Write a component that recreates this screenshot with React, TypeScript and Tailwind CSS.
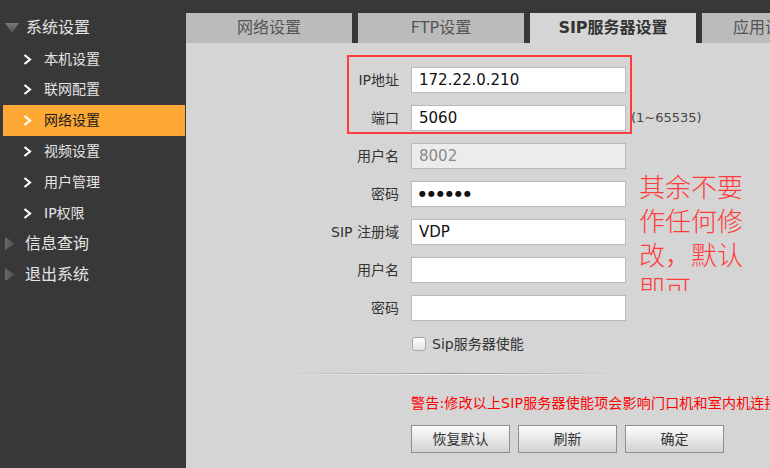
import React from "react";

const cjk = "font-['DejaVu_Sans','Noto_Sans_CJK_SC',sans-serif]";

function Chevron() {
  return (
    <svg width="9" height="11" viewBox="0 0 9 11" className="shrink-0">
      <polyline points="1.5,1 7,5.5 1.5,10" fill="none" stroke="#ffffff" strokeWidth="2.2" />
    </svg>
  );
}

function TriDown() {
  return (
    <svg width="14" height="10" viewBox="0 0 14 10" className="shrink-0">
      <defs>
        <linearGradient id="td" x1="0" y1="0" x2="0" y2="1">
          <stop offset="0" stopColor="#7a7a7a" />
          <stop offset="1" stopColor="#4e4e4e" />
        </linearGradient>
      </defs>
      <polygon points="0,0 14,0 7,10" fill="url(#td)" />
    </svg>
  );
}

function TriRight() {
  return (
    <svg width="10" height="13" viewBox="0 0 10 13" className="shrink-0">
      <defs>
        <linearGradient id="tr" x1="0" y1="0" x2="1" y2="0">
          <stop offset="0" stopColor="#6a6a6a" />
          <stop offset="1" stopColor="#4a4a4a" />
        </linearGradient>
      </defs>
      <polygon points="0,0 10,6.5 0,13" fill="url(#tr)" />
    </svg>
  );
}

const items = ["本机设置", "联网配置", "网络设置", "视频设置", "用户管理", "IP权限"];

function Sidebar() {
  return (
    <div className={`w-[186px] shrink-0 pt-[13px] ${cjk}`}>
      <div className="h-[30.8px] flex items-center pl-[5px]">
        <TriDown />
        <span className="ml-[7px] text-[16px] text-[#e4e4e4]">系统设置</span>
      </div>
      {items.map((t) => {
        const active = t === "网络设置";
        return (
          <div
            key={t}
            className={
              active
                ? "h-[30.8px] ml-[3px] mr-[1px] flex items-center pl-[20px] bg-[#fea935]"
                : "h-[30.8px] flex items-center pl-[23px]"
            }
          >
            <Chevron />
            <span
              className={
                active
                  ? "ml-[12px] text-[14px] text-[#1a1a1a]"
                  : "ml-[12px] text-[14px] text-[#e4e4e4]"
              }
            >
              {t}
            </span>
          </div>
        );
      })}
      {["信息查询", "退出系统"].map((t) => (
        <div key={t} className="h-[30.8px] flex items-center pl-[5px]">
          <TriRight />
          <span className="ml-[10px] text-[16px] text-[#e4e4e4]">{t}</span>
        </div>
      ))}
    </div>
  );
}

const tabs = ["网络设置", "FTP设置", "SIP服务器设置"];

function Field({
  label,
  value,
  disabled,
  password,
  suffix,
}: {
  label: string;
  value?: string;
  disabled?: boolean;
  password?: boolean;
  suffix?: string;
}) {
  return (
    <div className="h-[26px] flex items-center">
      <div className="w-[90px] text-right text-[14px] text-[#333]">{label}</div>
      <div
        className={
          "ml-[12px] w-[215px] h-full flex items-center pl-[7px] border border-[#b9b9b9] " +
          (disabled ? "bg-[#ececec] text-[#8a8a8a]" : "bg-white text-[#111]")
        }
      >
        {password ? (
          <span className="text-[8px] tracking-[2px] text-[#111]">{value}</span>
        ) : (
          <span className="text-[15px]">{value}</span>
        )}
      </div>
      {suffix && <span className="ml-[5px] text-[13px] text-[#444]">{suffix}</span>}
    </div>
  );
}

function Btn({ label }: { label: string }) {
  return (
    <button className="w-[99px] h-[28px] border border-[#8f8f8f] bg-gradient-to-b from-[#fdfdfd] to-[#d2d2d2] text-[14px] text-[#333] shadow-[inset_0_1px_0_#ffffff]">
      {label}
    </button>
  );
}

export default function App() {
  return (
    <div className={`w-[770px] h-[468px] flex bg-[#383838] overflow-hidden ${cjk}`}>
      <Sidebar />
      <div className="flex-1 mt-[13px] flex flex-col min-w-0">
        <div className="h-[30px] flex gap-[6px] shrink-0">
          {tabs.map((t) => {
            const active = t === "SIP服务器设置";
            return (
              <div
                key={t}
                className={
                  active
                    ? "w-[166px] shrink-0 flex items-center justify-center bg-[#d5d5d5] text-[16px] font-bold text-[#333]"
                    : "w-[166px] shrink-0 flex items-center justify-center bg-[#bbbbbb] text-[16px] text-[#555]"
                }
              >
                {t}
              </div>
            );
          })}
          <div className="w-[166px] shrink-0 flex items-center pl-[31px] bg-[#bbbbbb] text-[16px] text-[#555] whitespace-nowrap">
            应用设置
          </div>
        </div>

        <div className="relative flex-1 bg-[#d5d5d5] flex flex-col">
          <div className="ml-[123px] pt-[24px] flex flex-col gap-[12px]">
            <Field label="IP地址" value="172.22.0.210" />
            <Field label="端口" value="5060" suffix="(1~65535)" />
            <Field label="用户名" value="8002" disabled />
            <Field label="密码" value="●●●●●●" password />
            <Field label="SIP 注册域" value="VDP" />
            <Field label="用户名" value="" />
            <Field label="密码" value="" />
          </div>

          <div className="ml-[226px] mt-[15px] h-[16px] flex items-center">
            <span className="w-[14px] h-[14px] rounded-[3px] border border-[#a9a9a9] bg-gradient-to-b from-[#ffffff] to-[#e2e2e2]" />
            <span className="ml-[6px] text-[14px] text-[#333]">Sip服务器使能</span>
          </div>

          <div className="ml-[91px] mt-[21px] w-[350px] flex flex-col">
            <div className="h-px bg-gradient-to-r from-transparent via-[#9a9a9a] to-transparent" />
            <div className="h-px bg-gradient-to-r from-transparent via-[#f4f4f4] to-transparent" />
          </div>

          <div className="ml-[225px] mt-[18px] h-[20px] leading-[20px] whitespace-nowrap text-[14px] tracking-[0.2px] text-[#ff0000]">
            警告:修改以上SIP服务器使能项会影响门口机和室内机连接
          </div>

          <div className="ml-[225px] mt-[12px] flex gap-[8px]">
            <Btn label="恢复默认" />
            <Btn label="刷新" />
            <Btn label="确定" />
          </div>

          {/* annotation overlays */}
          <div className="absolute left-[161px] top-[12px] w-[285px] h-[79px] border-2 border-[#ff3b3b] pointer-events-none" />
          <div className="absolute left-[453px] top-[126px] w-[110px] h-[122px] overflow-hidden font-['Noto_Sans_CJK_SC',sans-serif] font-light text-[26px] leading-[34px] text-[#ff3c3c]">
            <div>其余不要</div>
            <div>作任何修</div>
            <div>改，默认</div>
            <div>即可</div>
          </div>
        </div>
      </div>
    </div>
  );
}
